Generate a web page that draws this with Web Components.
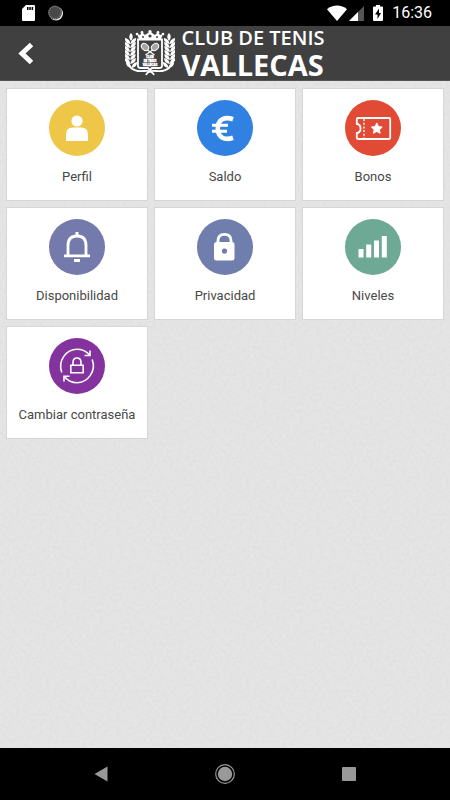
<!DOCTYPE html>
<html lang="es">
<head>
<meta charset="utf-8">
<meta name="viewport" content="width=device-width, initial-scale=1">
<title>Club de Tenis Vallecas</title>
<style>
  body {
    margin: 0;
    font-family: Roboto, "Liberation Sans", sans-serif;
  }
</style>
</head>
<body>
<club-app></club-app>

<script>
class StatusBar extends HTMLElement {
  constructor() {
    super();
    this.attachShadow({ mode: "open" });
  }

  static get styles() {
    return /* css */`
      :host {
        display: flex;
        justify-content: space-between;
        align-items: center;
        height: 26px;
        padding: 0 18px 0 22px;
        background: #000;
        color: #fff;
      }

      .group {
        display: flex;
        align-items: center;
      }

      .notifications { gap: 13px; }

      svg { display: block; }
      .wifi { margin-right: 2px; }
      .signal { margin-right: 9px; }
      .battery { margin-right: 9px; }

      time {
        font-size: 16px;
        line-height: 28px;
      }
    `;
  }

  connectedCallback() {
    this.render();
  }

  render() {
    this.shadowRoot.innerHTML = /* html */`
    <style>${StatusBar.styles}</style>
    <div class="group notifications">
      <svg width="13" height="16" viewBox="0 0 13 16">
        <path d="M4 0h8a1 1 0 0 1 1 1v14a1 1 0 0 1-1 1H1a1 1 0 0 1-1-1V4z" fill="#fff"/>
        <path d="M5 2h1.500v3H5zM7.300 2h1.500v3H7.300zM9.600 2h1.500v3H9.600z" fill="#000"/>
      </svg>
      <svg width="15" height="16" viewBox="0 0 15 16">
        <circle cx="8" cy="8.500" r="7" fill="#eee"/>
        <circle cx="7" cy="7.500" r="7" fill="#484848"/>
        <circle cx="7" cy="7.500" r="6" fill="none" stroke="#999" stroke-dasharray="1 1"/>
      </svg>
    </div>
    <div class="group">
      <svg class="wifi" width="20" height="16" viewBox="0 0 20 16">
        <path d="M0 4.200C5.500-.8 14.500-.8 20 4.200L10 16z" fill="#fff"/>
      </svg>
      <svg class="signal" width="15" height="15" viewBox="0 0 15 15">
        <path d="M15 0v15H0z" fill="#555"/>
        <path d="M9 6v9H0z" fill="#fff"/>
      </svg>
      <svg class="battery" width="10" height="16" viewBox="0 0 10 16">
        <path d="M3 0h4v1.500h2a1 1 0 0 1 1 1V15a1 1 0 0 1-1 1H1a1 1 0 0 1-1-1V2.500a1 1 0 0 1 1-1h2z" fill="#fff"/>
        <path d="M6 3.500L2 9.500h2.500v4.500l3.500-6H6z" fill="#000"/>
      </svg>
      <time datetime="16:36">16:36</time>
    </div>`;
  }
}

class ClubCrest extends HTMLElement {
  constructor() {
    super();
    this.attachShadow({ mode: "open" });
  }

  // One laurel branch, drawn on the left; the right one is its mirror
  get branch() {
    const leaves = [];
    for (let i = 0; i < 7; i++) {
      const y = 10 + i * 4;
      const x = 5.5 - Math.sin(i / 6 * Math.PI) * 0.5 + (i === 6 ? 1 : 0);
      leaves.push(`<path d="M${x} ${y + 4}q-6-1-5.500-6q5 1 5.500 6zM${x} ${y + 4}q6-1 5.500-6q-5 1-5.500 6z"/>`);
    }
    return `
      <path d="M6 3q3.500 3.500 0 8q-3.500-4.500 0-8z"/>
      ${leaves.join("")}
      <path d="M5 37Q10 42 19 41Q27 40 29 45" fill="none" stroke="#fff" stroke-width="1.800"/>`;
  }

  render() {
    this.shadowRoot.innerHTML = /* html */`
    <style>
      :host { display: block; }
      svg { display: block; }
    </style>
    <svg width="50" height="48" viewBox="0 0 50 48" fill="#fff">
      <g>${this.branch}</g>
      <g transform="matrix(-1 0 0 1 50 0)">${this.branch}</g>
      <path d="M14 9L12 4l3 1 2-3 3 3 3-2 2-2 2 2 3 2 3-3 2 3 3-1-2 5z"/>
      <g>
        <circle cx="12" cy="4" r="1.300"/><circle cx="17" cy="2.300" r="1.300"/>
        <circle cx="25" cy="1.600" r="1.600"/><circle cx="33" cy="2.300" r="1.300"/>
        <circle cx="38" cy="4" r="1.300"/>
      </g>
      <circle cx="25" cy="6" r="1.600" fill="#404040"/>
      <path d="M17 7h2M31 7h2" stroke="#404040" stroke-width="1.500"/>
      <path d="M13 9.500h24V36q0 2-3 2h-7l-2 2-2-2h-7q-3 0-3-2z" fill="#404040" stroke="#fff" stroke-width="1.800"/>
      <path d="M21 19l8.500 6M29 19l-8.500 6" stroke="#fff" stroke-width="1.300"/>
      <ellipse cx="20" cy="17" rx="4" ry="3" transform="rotate(40 20 17)" fill="#a5a5a5" stroke="#fff"/>
      <ellipse cx="30" cy="17" rx="4" ry="3" transform="rotate(-40 30 17)" fill="#a5a5a5" stroke="#fff"/>
      <g font-family="Roboto, sans-serif" font-weight="900" font-size="3" text-anchor="middle" stroke="#fff" stroke-width=".3">
        <text x="25" y="28">CLUB</text>
        <text x="25" y="32">DE TENIS</text>
        <text x="25" y="36">VALLECAS</text>
      </g>
    </svg>`;
  }

  connectedCallback() {
    this.render();
  }
}

class ClubHeader extends HTMLElement {
  constructor() {
    super();
    this.attachShadow({ mode: "open" });
  }

  static get styles() {
    return /* css */`
      :host {
        display: grid;
        grid-template-columns: 1fr auto 1fr;
        align-items: center;
        height: 54px;
        border-bottom: 1px solid #555;
        background: #404040;
        color: #fff;
      }

      button {
        justify-self: start;
        margin: 0;
        padding: 16px 18px;
        border: 0;
        background: none;
        cursor: pointer;
      }

      svg { display: block; }

      .brand {
        display: flex;
        align-items: center;
        gap: 6px;
      }

      h1 {
        display: grid;
        margin: 0;
        font-family: "Open Sans", "Noto Sans", sans-serif;
        font-size: 20px;
        font-weight: 600;
        line-height: 22px;
      }

      .place {
        font-size: 29px;
        font-weight: 700;
        line-height: 32px;
      }
    `;
  }

  connectedCallback() {
    this.render();
  }

  render() {
    this.shadowRoot.innerHTML = /* html */`
    <style>${ClubHeader.styles}</style>
    <button type="button" aria-label="Volver">
      <svg width="17" height="23" viewBox="0 0 17 23">
        <path d="M13.500 2.500L4 11.500l9.500 9" fill="none" stroke="#fff" stroke-width="5"/>
      </svg>
    </button>
    <div class="brand">
      <club-crest></club-crest>
      <h1><span><slot name="kind"></slot></span><span class="place"><slot name="place"></slot></span></h1>
    </div>`;
  }
}

class MenuCard extends HTMLElement {
  constructor() {
    super();
    this.attachShadow({ mode: "open" });
  }

  static get styles() {
    return /* css */`
      :host { display: block; }

      a {
        display: flex;
        flex-direction: column;
        align-items: center;
        gap: 12px;
        padding: 11px 4px 14px;
        border: 1px solid #d6d6d6;
        background: #fff;
        color: #484848;
        font-size: 13px;
        line-height: 18px;
        text-align: center;
        text-decoration: none;
      }

      .disc {
        width: 56px;
        height: 56px;
        border-radius: 50%;
        background: var(--color);
      }
    `;
  }

  connectedCallback() {
    this.render();
  }

  render() {
    this.shadowRoot.innerHTML = /* html */`
    <style>${MenuCard.styles}</style>
    <a href="#${this.getAttribute("target")}">
      <span class="disc"><slot name="icon"></slot></span>
      <span><slot></slot></span>
    </a>`;
  }
}

class MenuGrid extends HTMLElement {
  constructor() {
    super();
    this.attachShadow({ mode: "open" });
    this.shadowRoot.innerHTML = /* html */`
    <style>
      :host {
        display: grid;
        grid-template-columns: repeat(3, minmax(0, 1fr));
        align-content: start;
        gap: 6px;
        padding: 7px 6px;
      }
    </style>
    <slot></slot>`;
  }
}

class NavBar extends HTMLElement {
  constructor() {
    super();
    this.attachShadow({ mode: "open" });
  }

  static get styles() {
    return /* css */`
      :host {
        display: flex;
        justify-content: center;
        align-items: center;
        gap: 76px;
        height: 52px;
        background: #000;
      }

      button {
        display: flex;
        justify-content: center;
        align-items: center;
        width: 48px;
        height: 48px;
        padding: 0;
        border: 0;
        background: none;
        cursor: pointer;
      }
    `;
  }

  connectedCallback() {
    this.render();
  }

  render() {
    this.shadowRoot.innerHTML = /* html */`
    <style>${NavBar.styles}</style>
    <button type="button" aria-label="Atrás">
      <svg width="14" height="16" viewBox="0 0 14 16"><path d="M13.500.5v15L.5 8z" fill="#999"/></svg>
    </button>
    <button type="button" aria-label="Inicio">
      <svg width="20" height="20" viewBox="0 0 20 20">
        <circle cx="10" cy="10" r="9.300" fill="none" stroke="#999" stroke-width="1.200"/>
        <circle cx="10" cy="10" r="7.200" fill="#999"/>
      </svg>
    </button>
    <button type="button" aria-label="Recientes">
      <svg width="14" height="14" viewBox="0 0 14 14"><rect width="14" height="14" rx="1" fill="#999"/></svg>
    </button>`;
  }
}

class ClubApp extends HTMLElement {
  constructor() {
    super();
    this.attachShadow({ mode: "open" });
  }

  static get styles() {
    return /* css */`
      :host {
        --paper: url("data:image/svg+xml,%3Csvg xmlns='http://www.w3.org/2000/svg' width='200' height='200'%3E%3Cfilter id='n'%3E%3CfeTurbulence type='fractalNoise' baseFrequency='.3' numOctaves='3' stitchTiles='stitch'/%3E%3CfeColorMatrix values='0 0 0 0 0 0 0 0 0 0 0 0 0 0 0 .05 0 0 0 0'/%3E%3C/filter%3E%3Crect width='200' height='200' filter='url(%23n)'/%3E%3C/svg%3E");

        display: flex;
        flex-direction: column;
        min-height: 100vh;
        background: var(--paper), #e9e9e9;
      }

      main {
        flex: 1;
      }

      .icon {
        display: block;
        fill: #fff;
      }

      .line {
        fill: none;
        stroke: #fff;
      }
    `;
  }

  connectedCallback() {
    this.render();
  }

  render() {
    this.shadowRoot.innerHTML = /* html */`
    <style>${ClubApp.styles}</style>
    <status-bar></status-bar>
    <club-header>
      <span slot="kind">CLUB DE TENIS</span>
      <span slot="place">VALLECAS</span>
    </club-header>
    <main>
      <menu-grid>
        <menu-card target="perfil" style="--color: #eec748">
          <svg slot="icon" class="icon" width="56" height="56" viewBox="0 0 56 56">
            <circle cx="28" cy="21" r="5.600"/>
            <path d="M17 41v-6.500q0-7 7-7h8q7 0 7 7V41z"/>
          </svg>
          Perfil
        </menu-card>
        <menu-card target="saldo" style="--color: #3181e3">
          <svg slot="icon" class="icon" width="56" height="56" viewBox="0 0 56 56">
            <path class="line" d="M36 19.200C28 16.500 20.800 19 20.800 28.500s7.200 12 15.200 9.300" stroke-width="4.600"/>
            <path d="M15 23.800h16v3H15zM15 29.800h15v3H15z"/>
          </svg>
          Saldo
        </menu-card>
        <menu-card target="bonos" style="--color: #e14a34">
          <svg slot="icon" class="icon" width="56" height="56" viewBox="0 0 56 56">
            <path class="line" d="M13 18h31q1.200 0 1.200 1.200v18.600q0 1.200-1.200 1.200H13q-1.200 0-1.200-1.200V33c5-.5 5-8.500 0-9v-4.800Q11.800 18 13 18z" stroke-width="1.800" stroke-linejoin="round"/>
            <path class="line" d="M19 19v19" stroke-width="1.400" stroke-dasharray="2 1.700"/>
            <path d="M31.800 23.300l1.500 3.200 3.600.5-2.600 2.500.7 3.600-3.200-1.800-3.200 1.800.7-3.600-2.600-2.500 3.600-.5z" stroke="#fff" stroke-width="1.200" stroke-linejoin="round"/>
          </svg>
          Bonos
        </menu-card>
        <menu-card target="disponibilidad" style="--color: #757aad">
          <svg slot="icon" class="icon" width="56" height="56" viewBox="0 0 56 56">
            <path class="line" d="M19 37V26.500Q19 17 28 17T37 26.500V37" stroke-width="2.800"/>
            <path d="M15 35.500h26v2.800H15zM26.500 13h3v4h-3zM25 40h6v3h-6z"/>
          </svg>
          Disponibilidad
        </menu-card>
        <menu-card target="privacidad" style="--color: #6f7eac">
          <svg slot="icon" class="icon" width="56" height="56" viewBox="0 0 56 56">
            <path class="line" d="M21 24v-2.500q0-6.200 6.500-6.200t6.500 6.200V24" stroke-width="2.800"/>
            <path fill-rule="evenodd" d="M19.500 23H35q2.500 0 2.500 2.500v13.500q0 2.500-2.500 2.500H19.500Q17 41.500 17 39V25.500Q17 23 19.500 23zm8 6.500a2.600 2.600 0 1 0 0 5.200 2.600 2.600 0 0 0 0-5.200z"/>
          </svg>
          Privacidad
        </menu-card>
        <menu-card target="niveles" style="--color: #6da995">
          <svg slot="icon" class="icon" width="56" height="56" viewBox="0 0 56 56">
            <path d="M13.500 30h5v8.500h-5zM21.200 25.500h5v13h-5zM29 21.500h5v17h-5zM36.800 17h5v21.500h-5z"/>
          </svg>
          Niveles
        </menu-card>
        <menu-card target="contrasena" style="--color: #83329e">
          <svg slot="icon" class="icon line" width="56" height="56" viewBox="0 0 56 56" stroke-width="1.600">
            <path d="M12.800 34.500C8.500 23 17 11.300 28 11.300q7.500 0 12.500 5.500M41 12.500v5h-5.500"/>
            <path d="M43.200 21.500C47.500 33 39 44.700 28 44.700q-7.500 0-12.500-6M15 43.500v-5.200h5.500"/>
            <path d="M21.800 27.200h12.400v7.600H21.800zM24 27v-2.500q0-4.500 4-4.500t4 4.500V27"/>
          </svg>
          Cambiar contraseña
        </menu-card>
      </menu-grid>
    </main>
    <nav-bar></nav-bar>`;
  }
}

customElements.define("status-bar", StatusBar);
customElements.define("club-crest", ClubCrest);
customElements.define("club-header", ClubHeader);
customElements.define("menu-card", MenuCard);
customElements.define("menu-grid", MenuGrid);
customElements.define("nav-bar", NavBar);
customElements.define("club-app", ClubApp);
</script>
</body>
</html>
